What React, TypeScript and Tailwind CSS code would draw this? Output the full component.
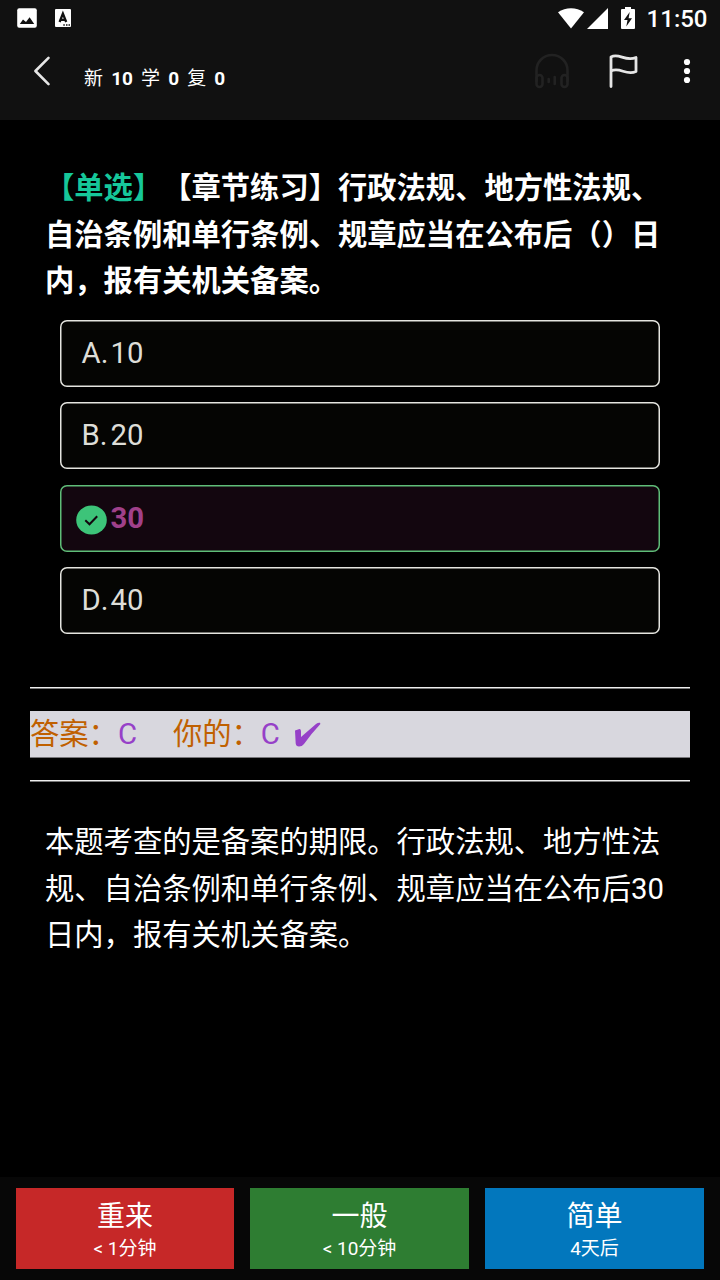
import type { ReactNode } from "react";

function StatusBar() {
  return (
    <div className="flex h-9 items-center pl-[17px] pr-3 text-white">
      <svg className="h-5 w-5" viewBox="0 0 20 20">
        <rect x="0.2" y="0.2" width="19.6" height="19.6" rx="2" fill="#fff" />
        <path d="M2.8 16 6 11.5l3 2.5 3.6-4.8L17.2 16Z" fill="#111" />
      </svg>
      <svg className="ml-[18px] h-[18px] w-4" viewBox="0 0 16 18">
        <rect width="16" height="18" rx="1" fill="#fff" />
        <path d="m4.6 13 3.3-8.3 3.3 8.3M5.7 10.8h4.4" fill="none" stroke="#111" strokeWidth="2.3" />
        <path d="M8.3 15.2h1.5v1.5H8.3zM11 15.2h1.5v1.5H11zM13.5 15.2H15v1.5h-1.5z" fill="#111" />
      </svg>
      <div className="flex-1" />
      <svg className="h-[21px] w-[26px]" viewBox="0 0 26 21">
        <path d="M0 4.3Q6 .2 13 .2T26 4.3L13 20.4Z" fill="#fff" />
      </svg>
      <svg className="ml-[3px] h-[21px] w-[21px]" viewBox="0 0 21 21">
        <path d="M21 0v21H0Z" fill="#fff" />
      </svg>
      <svg className="ml-[13px] h-[22px] w-3.5" viewBox="0 0 14 22">
        <path d="M4 0h6v2h3q1 0 1 1v18q0 1-1 1H1q-1 0-1-1V3q0-1 1-1h3Z" fill="#fff" />
        <path d="M8.7 5 3 13h3.5l-1.2 6.5L11 11.2H7.6Z" fill="#111" />
      </svg>
      <span className="ml-3 pr-[0.5px] pt-0.5 text-[24px] font-medium leading-9">11:50</span>
    </div>
  );
}

function Toolbar() {
  return (
    <div className="flex h-[84px] items-start pl-[33px] text-[#e6e6e6]">
      <svg className="mt-5 h-[30px] w-[18px]" viewBox="0 0 18 30" fill="none" stroke="currentColor" strokeWidth="2.6" strokeLinecap="round" strokeLinejoin="round">
        <path d="M15.5 1.9 2.4 15l13.1 13.1" />
      </svg>
      <div className="ml-[33px] mt-7 flex-1 whitespace-pre text-[19px] leading-[30px] text-white [word-spacing:3.4px]">
        新 <b>10</b> 学 <b>0</b> 复 <b>0</b>
      </div>
      <svg className="mt-[17px] h-9 w-9 text-[#222]" viewBox="0 0 36 36" fill="none" stroke="currentColor" strokeWidth="2.6" strokeLinecap="round">
        <path d="M2.5 28V17.5a15.5 15.5 0 0 1 31 0V28" />
        <rect x="2.5" y="22" width="6" height="12" rx="3" />
        <rect x="27.5" y="22" width="6" height="12" rx="3" />
        <path d="M14.7 26v3M20.7 24v7" />
      </svg>
      <svg className="ml-[38px] mt-[17px] h-9 w-[30px]" viewBox="0 0 30 36" fill="none" stroke="currentColor" strokeWidth="2.8" strokeLinecap="round" strokeLinejoin="round">
        <path d="M3 33.5V4C11-.5 17 9 28 4.5v14C18 23 12 13.5 3 18" />
      </svg>
      <svg className="ml-[45px] mr-[29px] mt-[22px] h-[26px] w-2" viewBox="0 0 8 26" fill="#fff">
        <circle cx="4" cy="4" r="3.1" />
        <circle cx="4" cy="13" r="3.1" />
        <circle cx="4" cy="22" r="3.1" />
      </svg>
    </div>
  );
}

function Option({ label, value }: { label: string; value: string }) {
  return (
    <div className="flex h-[67px] items-center rounded-[7px] bg-[#050503] pl-[21.5px] pt-[1.5px] text-[29.3px] text-[#deded8] shadow-[inset_0_0_0_1.5px_#e5e5e0]">
      <span className="flex w-[29px] justify-between pr-[3px]">
        <span>{label}</span>
        <span>.</span>
      </span>
      <span>{value}</span>
    </div>
  );
}

function CorrectOption({ value }: { value: string }) {
  return (
    <div className="flex h-[67px] items-center rounded-[7px] bg-[#13060f] pl-4 pt-px text-[29.3px] font-bold text-[#a0408a] shadow-[inset_0_0_0_1.5px_#5fbd78]">
      <svg className="mr-[3.5px] mt-[3px] h-[31px] w-[31px]" viewBox="0 0 31 31">
        <ellipse cx="15.5" cy="15" rx="15.3" ry="14.5" fill="#3dc479" />
        <path d="m9.3 15.3 4.2 4 7.7-8" fill="none" stroke="#13060f" strokeWidth="2" />
      </svg>
      <span>{value}</span>
    </div>
  );
}

function Rule() {
  return (
    <div className="h-[2px]">
      <div className="h-px bg-[#eee]" />
      <div className="h-px bg-[#777]" />
    </div>
  );
}

function Line({ children }: { children: ReactNode }) {
  return <div className="whitespace-pre">{children}</div>;
}

function GradeButton({ title, due, color }: { title: string; due: string; color: string }) {
  return (
    <button className={`flex h-[81px] flex-col items-center pt-[11px] text-white ${color}`}>
      <span className="text-[28px] leading-9">{title}</span>
      <span className="text-[19px] leading-[28px]">{due}</span>
    </button>
  );
}

export default function App() {
  return (
    <div className="flex h-[1280px] w-[720px] flex-col overflow-hidden bg-black font-[Roboto,'Noto_Sans_CJK_SC',sans-serif] [text-spacing-trim:space-all]">
      <header className="h-[120px] bg-[#111]">
        <StatusBar />
        <Toolbar />
      </header>

      <main className="flex-1 px-[30px] pt-[45px]">
        <h1 className="pl-[15px] text-[29.3px] font-bold leading-[46.67px] text-white">
          <Line>
            <span className="text-[#16c79a]">【单选】</span>【章节练习】行政法规、地方性法规、
          </Line>
          <Line>自治条例和单行条例、规章应当在公布后（）日</Line>
          <Line>内，报有关机关备案。</Line>
        </h1>

        <div className="mx-[30px] mt-[14.5px] flex flex-col gap-[15.5px]">
          <Option label="A" value="10" />
          <Option label="B" value="20" />
          <CorrectOption value="30" />
          <Option label="D" value="40" />
        </div>

        <div className="mt-[52.5px]">
          <Rule />
          <div className="mb-[22px] mt-[22px] flex h-[47px] items-center border-b border-[#77767a] bg-[#d8d7de] pt-0.5 text-[29.3px] text-[#9640c8]">
            <span className="text-[#c06000]">答案：</span>
            <span>C</span>
            <span className="ml-9 text-[#c06000]">你的：</span>
            <span>C</span>
            <svg className="ml-[14.5px] mt-px h-[26px] w-[27px]" viewBox="0 0 27 26" fill="currentColor">
              <path d="M1 8.5 5.5 7Q7 7 7 10v5L22 2q2-1.5 4-1.2l.4 1.2Q17 12 10 22q-2 2.5-5 2.5-3 0-3.3-3Z" />
            </svg>
          </div>
          <Rule />
        </div>

        <div className="mt-[37.5px] pl-[15px] text-[29.3px] leading-[46.67px] text-white">
          <Line>本题考查的是备案的期限。行政法规、地方性法</Line>
          <Line>规、自治条例和单行条例、规章应当在公布后30</Line>
          <Line>日内，报有关机关备案。</Line>
        </div>
      </main>

      <footer className="grid h-[103px] grid-cols-[218px_219px_219px] gap-4 bg-[#070707] px-4 pt-[11px]">
        <GradeButton title="重来" due="< 1分钟" color="bg-[#c62828]" />
        <GradeButton title="一般" due="< 10分钟" color="bg-[#2e7d32]" />
        <GradeButton title="简单" due="4天后" color="bg-[#0277bd]" />
      </footer>
    </div>
  );
}
